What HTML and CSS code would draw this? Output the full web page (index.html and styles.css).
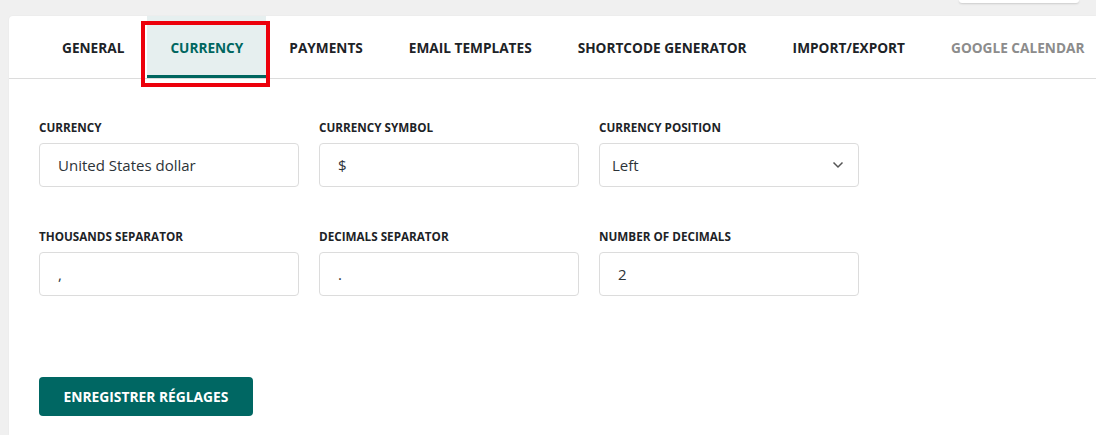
FILE: index.html
```html
<!DOCTYPE html>
<html>
<head>
<meta charset="utf-8">
<link rel="stylesheet" href="styles.css">
</head>
<body>
<div class="topstrip"><div class="topbtn"></div></div>
<div class="card">
  <nav class="tabs">
    <div class="tab">GENERAL</div>
    <div class="tab active">CURRENCY<span class="highlight"></span></div>
    <div class="tab">PAYMENTS</div>
    <div class="tab">EMAIL TEMPLATES</div>
    <div class="tab">SHORTCODE GENERATOR</div>
    <div class="tab">IMPORT/EXPORT</div>
    <div class="tab muted">GOOGLE CALENDAR</div>
  </nav>
  <div class="form">
    <div class="grid">
      <div class="field">
        <label class="label">CURRENCY</label>
        <div class="input">United States dollar</div>
      </div>
      <div class="field">
        <label class="label">CURRENCY SYMBOL</label>
        <div class="input">$</div>
      </div>
      <div class="field">
        <label class="label">CURRENCY POSITION</label>
        <div class="input select"><span>Left</span>
          <svg class="chev" width="12" height="8" viewBox="0 0 12 8"><path d="M1.5 1.5 L6 6 L10.5 1.5" fill="none" stroke="#555" stroke-width="1.5"/></svg>
        </div>
      </div>
      <div class="field">
        <label class="label">THOUSANDS SEPARATOR</label>
        <div class="input">,</div>
      </div>
      <div class="field">
        <label class="label">DECIMALS SEPARATOR</label>
        <div class="input">.</div>
      </div>
      <div class="field">
        <label class="label">NUMBER OF DECIMALS</label>
        <div class="input">2</div>
      </div>
    </div>
    <button class="save">ENREGISTRER RÉGLAGES</button>
  </div>
</div>
</body>
</html>
```
FILE: styles.css
```css
html, body {
  margin: 0;
  padding: 0;
}
body {
  background: #f0f0f0;
  font-family: "Open Sans", "Liberation Sans", sans-serif;
  color: #1d2327;
  width: 1096px;
  height: 435px;
  overflow: hidden;
}
.topstrip {
  height: 16px;
  display: flex;
  justify-content: flex-end;
  padding-right: 17px;
}
.topbtn {
  width: 120px;
  height: 3px;
  background: #fff;
  border-radius: 0 0 4px 4px;
  box-shadow: 0 1px 2px rgba(0,0,0,0.15);
}
.card {
  margin-left: 9px;
  background: #fff;
  border-top-left-radius: 4px;
  box-shadow: 0 0 2px rgba(0,0,0,0.06);
  height: 419px;
}
.tabs {
  display: flex;
  height: 62px;
  padding-left: 30px;
  border-bottom: 1px solid #dcdcdc;
  white-space: nowrap;
}
.tab {
  position: relative;
  display: flex;
  align-items: center;
  padding: 0 23px;
  font-size: 13.65px;
  font-weight: 700;
  color: #1d2327;
  box-sizing: border-box;
}
.tab.active {
  background: #e6efef;
  color: #00665f;
  border-bottom: 3px solid #00665f;
  padding-top: 3px;
}
.tab.muted {
  color: #8c8c8c;
}
.highlight {
  position: absolute;
  top: 5px;
  left: -6px;
  right: -4px;
  bottom: -12px;
  border: 4px solid #ec000b;
}
.form {
  padding: 40px 30px 0 30px;
}
.grid {
  display: grid;
  grid-template-columns: 260px 260px 260px;
  column-gap: 20px;
  row-gap: 41px;
}
.field {
  display: flex;
  flex-direction: column;
}
.label {
  font-size: 11.7px;
  font-weight: 700;
  line-height: 16px;
  color: #1d2327;
  margin-bottom: 8px;
}
.input {
  height: 44px;
  box-sizing: border-box;
  border: 1px solid #dcdcdc;
  border-radius: 4px;
  padding: 0 18px;
  display: flex;
  align-items: center;
  font-size: 15px;
  color: #2c3338;
}
.input.select {
  padding: 0 14px 0 12px;
  justify-content: space-between;
}
.chev {
  display: block;
}
.save {
  margin-top: 81px;
  width: 214px;
  height: 39px;
  border: none;
  border-radius: 4px;
  background: #006763;
  color: #fff;
  font-family: "Open Sans", "Liberation Sans", sans-serif;
  font-size: 13.8px;
  font-weight: 700;
  padding: 0;
  cursor: pointer;
}
```
